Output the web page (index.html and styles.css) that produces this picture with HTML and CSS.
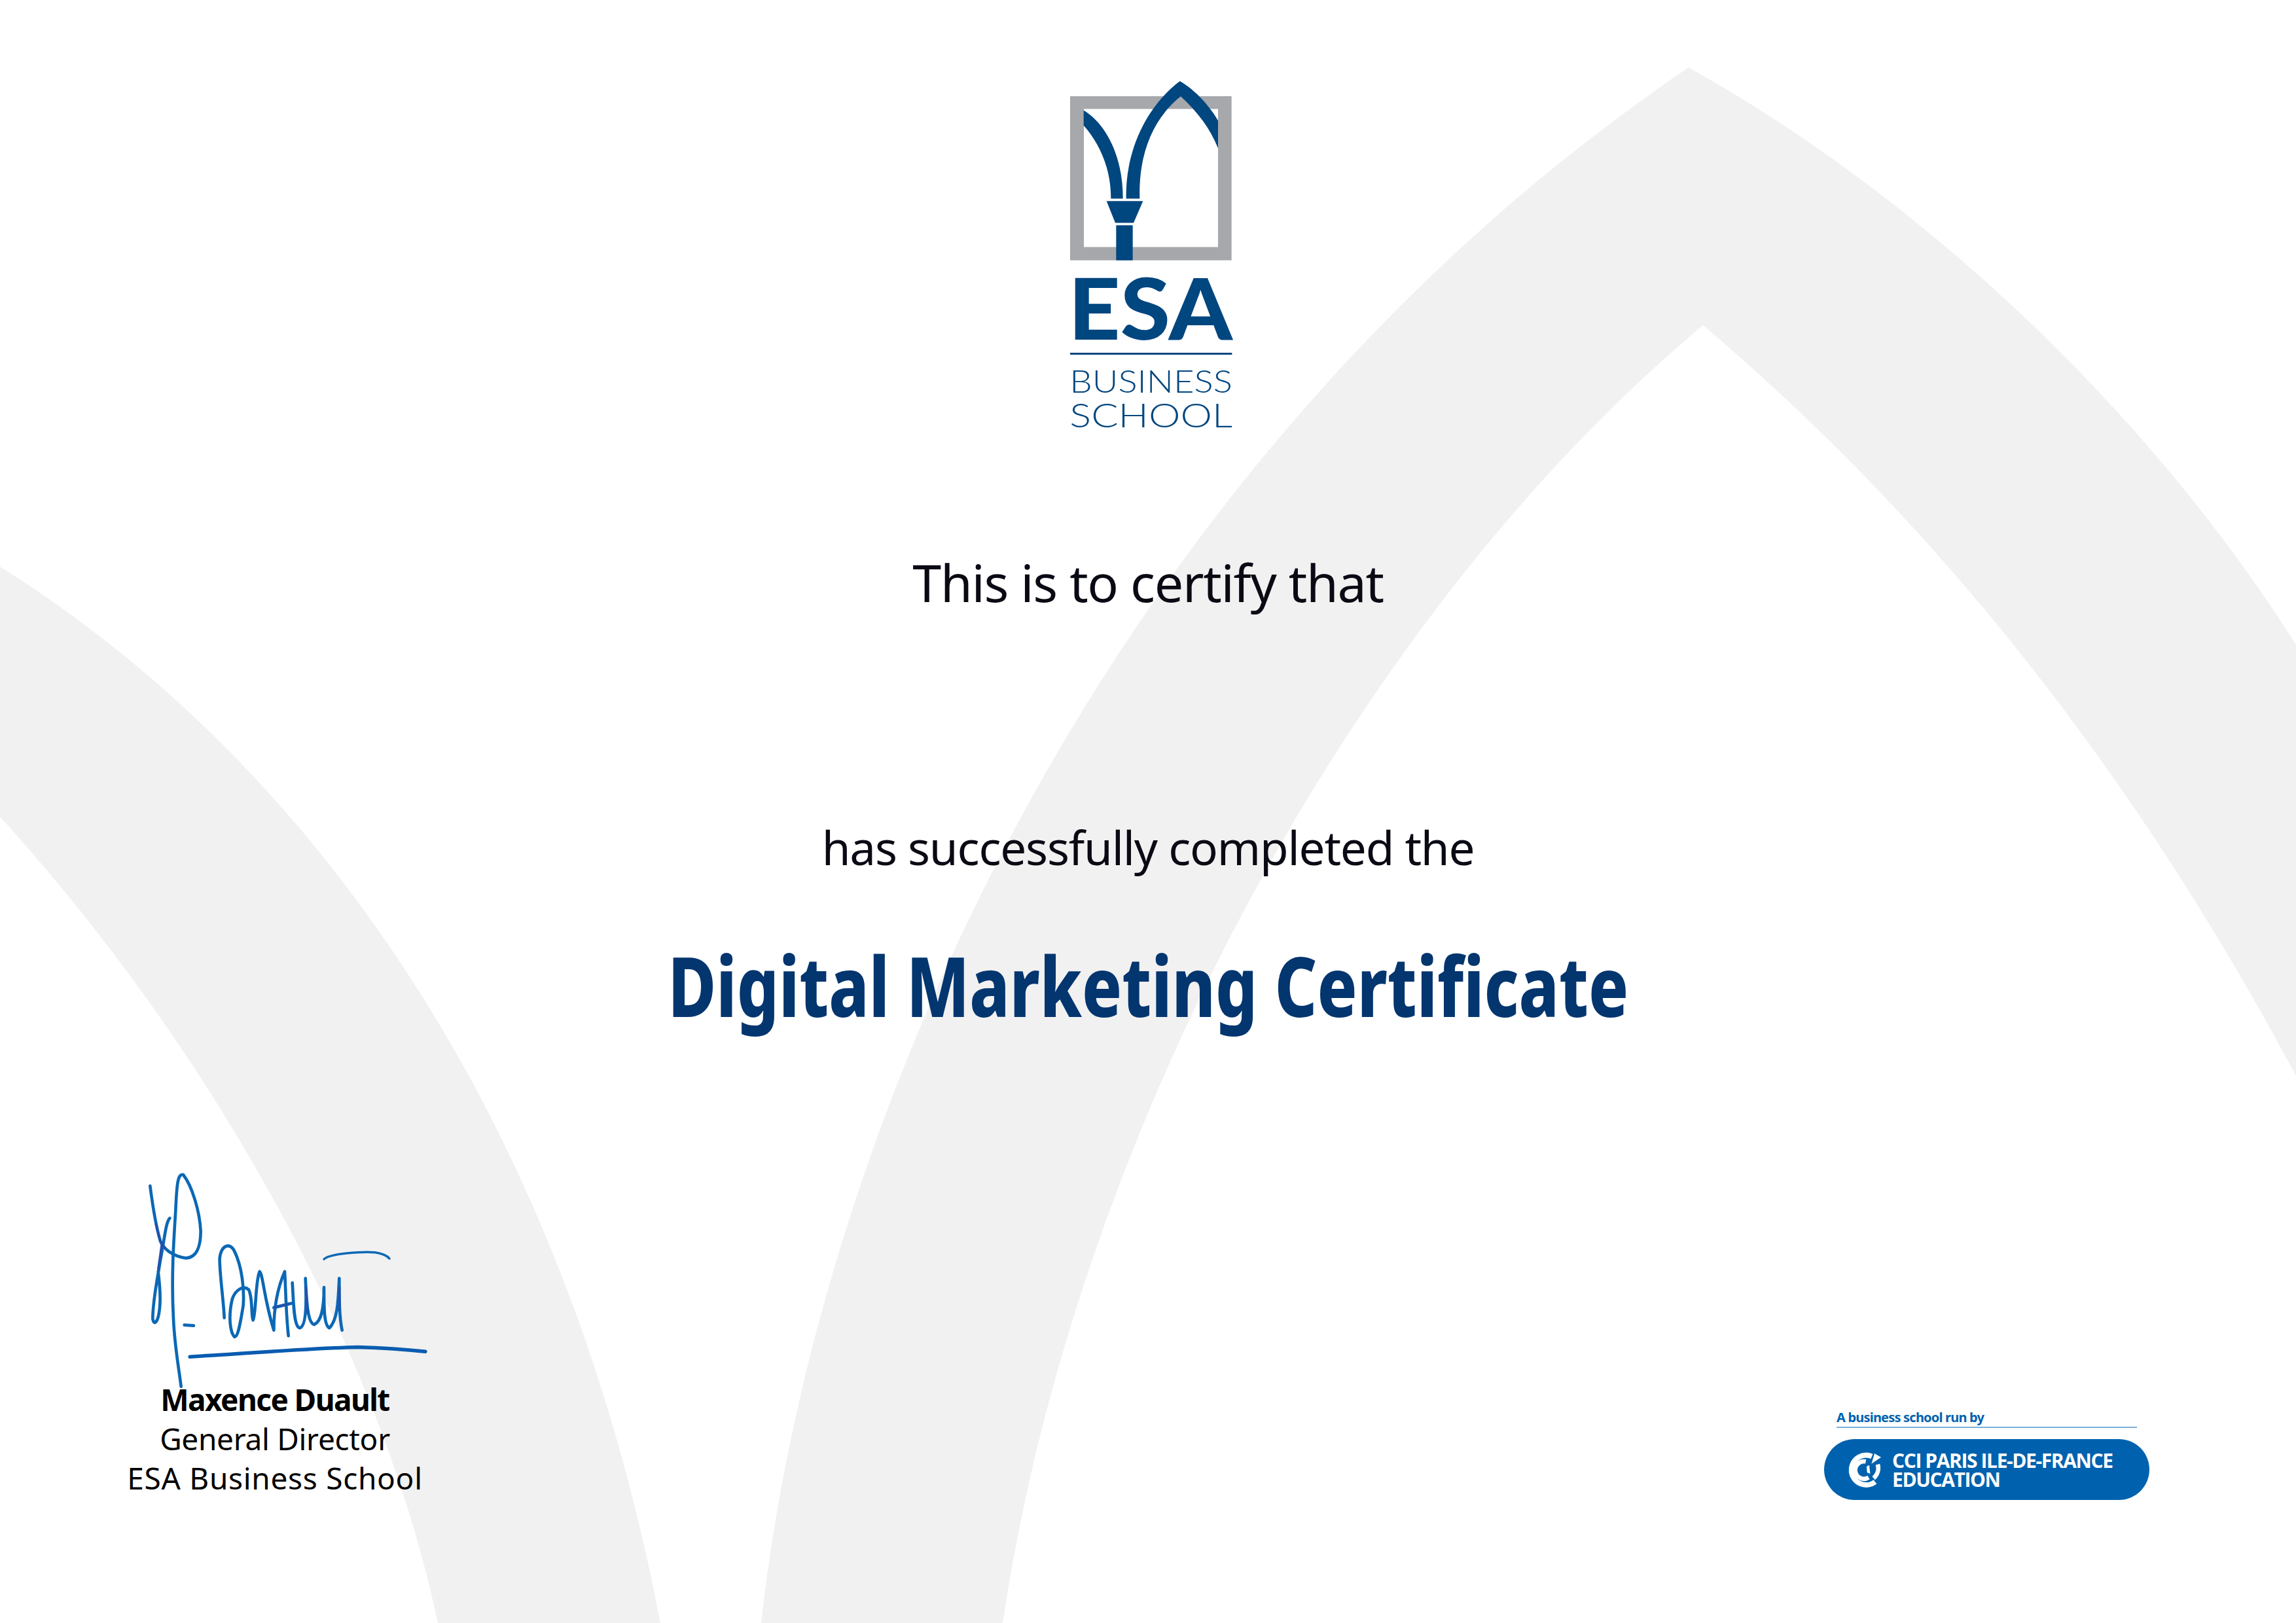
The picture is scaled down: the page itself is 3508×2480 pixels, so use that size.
FILE: index.html
```html
<!DOCTYPE html>
<html lang="en">
<head>
<meta charset="utf-8">
<title>Digital Marketing Certificate</title>
<link rel="stylesheet" href="styles.css">
</head>
<body>
<main class="page">
  <svg class="backdrop" viewBox="0 0 3508 2480" aria-hidden="true">
    <path class="arch" d="M1163 2480 C1250 1700 1700 700 2580 103 C2950 310 3290 640 3508 985 L3508 1644 C3260 1180 2960 800 2602 497 C2060 950 1640 1750 1532 2480 Z"/>
    <path class="arch" d="M0 866 C470 1160 860 1700 1009 2480 L669 2480 C580 2060 320 1600 0 1248 Z"/>
  </svg>

  <svg class="logo" viewBox="0 0 1050 1568" preserveAspectRatio="none" role="img" aria-label="ESA Business School">
    <path class="logo-frame" fill-rule="evenodd" d="M168 127H908V805H168Z M231 180V750H846V180Z"/>
    <path class="logo-ink" d="M425 550 C420 340 530 160 671 65 C740 100 810 170 846 228 L846 342 C810 260 750 190 675 128 C560 210 480 350 487 550 Z"/>
    <path class="logo-ink" d="M230 185 C330 240 410 370 410 550 L355 550 C355 420 300 320 230 248 Z"/>
    <path class="logo-ink" d="M335 560 H502 L459 650 H375 Z"/>
    <path class="logo-ink" d="M379 660 H455 V805 H379 Z"/>
    <text class="logo-esa" x="160" y="1133" textLength="752" lengthAdjust="spacingAndGlyphs">ESA</text>
    <path class="logo-ink" d="M168 1187 H910 V1195 H168 Z"/>
    <text class="logo-sub" x="166" y="1351" textLength="746" lengthAdjust="spacingAndGlyphs">BUSINESS</text>
    <text class="logo-sub-b" x="166" y="1494" textLength="746" lengthAdjust="spacingAndGlyphs">SCHOOL</text>
  </svg>

  <p class="lead">This is to certify that</p>
  <p class="sub">has successfully completed the</p>
  <h1 class="title"><span class="title-fit">Digital Marketing Certificate</span></h1>

  <footer class="footer">
    <section class="signatory">
      <svg class="signature" viewBox="0 0 1560 999" preserveAspectRatio="none" role="img" aria-label="Signature">
        <g class="sig-stroke">
          <path d="M178 140 C190 230 205 320 225 385 C240 420 280 450 340 460 C395 460 410 400 410 340 C405 250 370 140 330 90 C305 85 300 130 295 250 C285 400 275 550 285 730 C290 850 310 950 320 1030"/>
          <path d="M268 283 C250 300 245 370 225 470 C210 560 190 650 190 730 C195 760 215 750 222 680 C228 620 220 560 215 520"/>
          <path d="M335 757 L378 760"/>
          <path d="M518 725 C515 650 495 520 497 460 C505 400 545 390 565 430 C600 500 610 600 605 670 C590 760 580 810 565 810 C545 790 535 720 555 640 C570 600 605 580 630 600 C650 640 640 720 650 735 C665 700 660 560 680 520 C695 530 700 640 745 780 C745 720 750 620 795 520 C800 600 800 700 812 805"/>
          <path d="M745 680 L830 660"/>
          <path d="M830 570 C835 640 835 770 865 770 C895 760 895 650 890 550 C895 650 900 750 930 755 C965 740 975 680 975 590 C975 680 975 760 1000 770 C1040 730 1040 640 1045 550 C1045 650 1045 720 1058 780"/>
          <path class="sig-thin" d="M975 465 C1000 440 1150 430 1210 435 C1240 440 1265 450 1275 462"/>
          <path class="sig-under" d="M360 898 C600 885 900 860 1130 855 C1250 858 1350 865 1440 875"/>
          <path class="sig-dark" d="M205 310 L225 385 L245 415"/>
          <path class="sig-dark" d="M232 395 L215 510"/>
          <path class="sig-dark" d="M748 678 L815 662"/>
          <path class="sig-dark" d="M892 590 L900 700"/>
          <path class="sig-dark" d="M1046 590 L1046 690"/>
        </g>
      </svg>
      <p class="sign-name">Maxence Duault</p>
      <p class="sign-role">General Director</p>
      <p class="sign-school">ESA Business School</p>
    </section>

    <section class="cci">
      <p class="cci-run">A business school run by</p>
      <div class="cci-pill">
        <svg class="cci-icon" viewBox="0 0 240 240" aria-hidden="true">
          <path class="cci-ring" d="M150 58 A68 68 0 1 0 165 175"/>
          <path class="cci-ring-r" d="M177 95 A62 62 0 0 1 158 158"/>
          <path class="cci-inner" d="M122 82 A40 40 0 1 0 135 155"/>
          <path class="cci-fill" d="M148 92 L162 45 L192 62 Z"/>
          <path class="cci-fill" d="M126 104 L138 98 L142 138 L128 132 Z"/>
        </svg>
        <p class="cci-name">CCI PARIS ILE-DE-FRANCE<br>EDUCATION</p>
      </div>
    </section>
  </footer>
</main>
</body>
</html>
```
FILE: styles.css
```css
html, body { margin: 0; padding: 0; background: #fff; }
p, h1 { margin: 0; }

.page {
  position: relative;
  box-sizing: border-box;
  width: 3508px;
  height: 2480px;
  overflow: hidden;
  background: #fff;
  display: flex;
  flex-direction: column;
  align-items: center;
  padding-top: 100px;
  font-family: "Noto Sans", "Open Sans", sans-serif;
  color: #000;
}

.backdrop { position: absolute; inset: 0; width: 3508px; height: 2480px; }
.arch { fill: #f1f1f1; }

.logo, .lead, .sub, .title, .footer { position: relative; }

.logo { width: 350px; height: 580px; display: block; flex: none; }
.logo-frame { fill: #a7a8ac; }
.logo-ink { fill: #00467f; }
.logo-esa { font-family: Lato, sans-serif; font-weight: 900; font-size: 352px; fill: #00467f; }
.logo-sub { font-family: Lato, sans-serif; font-weight: 300; font-size: 128px; fill: #00467f; }
.logo-sub-b { font-family: Lato, sans-serif; font-weight: 300; font-size: 139px; fill: #00467f; }

.lead {
  margin-top: 160px;
  font-size: 79px;
  line-height: 100px;
  font-weight: 400;
  letter-spacing: -1.3px;
  color: #0a0a14;
}
.sub {
  margin-top: 305px;
  font-size: 71px;
  line-height: 100px;
  font-weight: 400;
  letter-spacing: -1.2px;
  color: #0a0a14;
}
.title {
  margin-top: 80px;
  font-size: 126px;
  line-height: 160px;
  font-weight: 800;
  color: #03356f;
  white-space: nowrap;
}
.title-fit { display: inline-block; transform: scaleX(0.8); }

.footer {
  margin-top: auto;
  align-self: stretch;
  display: flex;
  justify-content: space-between;
  align-items: flex-end;
  padding: 0 224px 188px 170px;
}

.signatory {
  width: 500px;
  margin-bottom: 4px;
  text-align: center;
  font-size: 46px;
  line-height: 60px;
  font-weight: 400;
}
.signature { display: block; width: 520px; height: 344px; overflow: visible; }
.sig-stroke path {
  fill: none;
  stroke: #0b68b5;
  stroke-width: 14;
  stroke-linecap: round;
  stroke-linejoin: round;
}
.sig-stroke .sig-under { stroke: #0a5cb0; stroke-width: 16; }
.sig-stroke .sig-thin { stroke-width: 10; }
.sig-stroke .sig-dark { stroke: #2450ac; stroke-width: 10; }
.sign-name { font-weight: 700; position: relative; letter-spacing: -1.6px; }
.sign-role { position: relative; letter-spacing: -0.3px; }
.sign-school { position: relative; letter-spacing: 0.7px; }

.cci { width: 497px; display: flex; flex-direction: column; color: #0062ae; }
.cci-run {
  margin: 0 19px;
  padding-bottom: 2px;
  border-bottom: 2px solid #7fb0d7;
  font-size: 20px;
  line-height: 25px;
  font-weight: 700;
  letter-spacing: -0.8px;
}
.cci-pill {
  margin-top: 17px;
  height: 93px;
  border-radius: 47px;
  background: #0062ae;
  display: flex;
  align-items: center;
  gap: 1px;
  padding-left: 23px;
}
.cci-icon { width: 80px; height: 80px; flex: none; }
.cci-ring { fill: none; stroke: #fff; stroke-width: 24; }
.cci-ring-r { fill: none; stroke: #fff; stroke-width: 20; }
.cci-inner { fill: none; stroke: #fff; stroke-width: 20; }
.cci-fill { fill: #fff; }
.cci-name {
  color: #fff;
  font-family: "Open Sans", "Noto Sans", sans-serif;
  font-size: 30px;
  line-height: 29px;
  font-weight: 700;
  letter-spacing: -1.4px;
  white-space: nowrap;
}
```
